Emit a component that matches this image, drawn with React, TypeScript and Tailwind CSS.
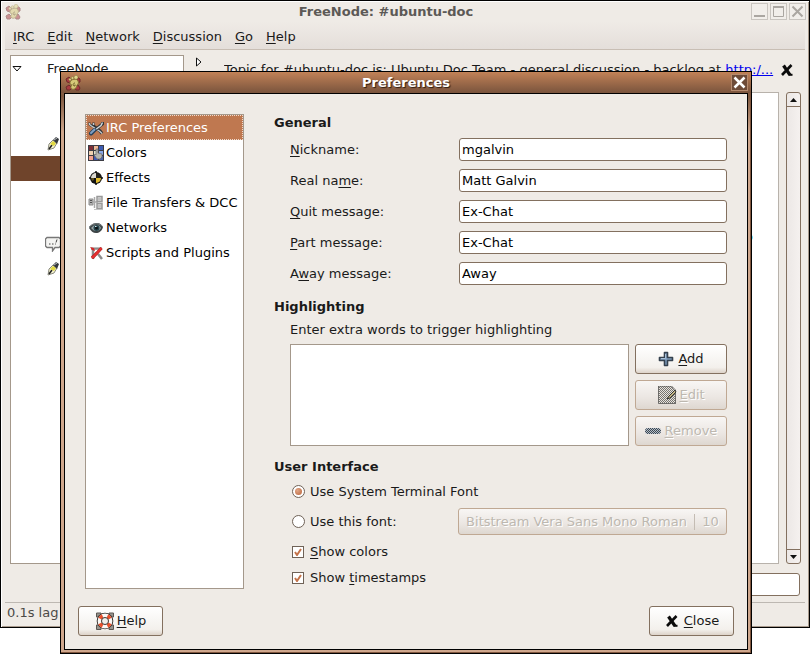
import type { ReactNode } from "react";

const font = "font-['DejaVu_Sans','Bitstream_Vera_Sans',sans-serif]";

function FootIcon({ className = "" }: { className?: string }) {
  return (
    <svg viewBox="0 0 16 16" className={`size-4 shrink-0 ${className}`} aria-hidden="true">
      <path d="M1 4l3-2 3 3-2 3-3-1zM12 2l3 2v3l-3 1zM1 12l3-2 3 3-2 2H2zM10 13l3-3 2 3-1 2h-3z" fill="#a83a40" stroke="#6f2a2a" strokeWidth="1" />
      <path d="M5 7c1-3 7-4 8-1 1 2 0 3-1 4 0 3-3 5-5 4-2-1-1-3 0-4-2 0-2-2-2-3z" fill="#d6c878" stroke="#857436" strokeWidth="1" />
      <circle cx="5" cy="4.500" r="1.200" fill="#e0d68c" stroke="#857436" strokeWidth=".5" />
      <circle cx="7.500" cy="3" r="1.300" fill="#e0d68c" stroke="#857436" strokeWidth=".5" />
      <circle cx="11" cy="2.300" r="2" fill="#e0d68c" stroke="#857436" strokeWidth=".5" />
      <path d="M10 8c-2 0-3 3 0 3V9.500" fill="none" stroke="#6d5c28" />
    </svg>
  );
}

function ToolsIcon() {
  return (
    <svg viewBox="0 0 16 16" className="size-4 shrink-0" aria-hidden="true">
      <path d="M4 5l8 6 2 2.500" stroke="#303438" strokeWidth="3.200" fill="none" />
      <path d="M1.500 2.500v2l2 1.500 2-1V2.500" stroke="#303438" strokeWidth="2.200" fill="none" />
      <path d="M1.500 3v1.500l2 1.500L12 11.500l2 2M5.500 3v2" stroke="#c4cace" strokeWidth="1.400" fill="none" />
      <path d="M14.500 2v2l-2 1.500L7 10" stroke="#303438" strokeWidth="3" fill="none" />
      <path d="M14.500 2.500l-1.500 3-6 4.500" stroke="#d4d8da" strokeWidth="1.500" fill="none" />
      <path d="M6.500 10L3 13.500" stroke="#27425e" strokeWidth="4" strokeLinecap="round" />
      <path d="M6.500 9.500L3 13" stroke="#7fa0c4" strokeWidth="2" strokeLinecap="round" />
    </svg>
  );
}

function ColorsIcon() {
  return (
    <svg viewBox="0 0 16 16" className="size-4 shrink-0" aria-hidden="true">
      <rect width="16" height="16" fill="#3c3c44" />
      <path d="M1 1h4v4H1z" fill="#7d2f36" />
      <path d="M6 1h4v4H6z" fill="#f0b896" />
      <path d="M11 1h4v4h-4z" fill="#3c5cb4" />
      <path d="M1 6h4v4H1z" fill="#f0d0b0" />
      <path d="M6 6h4v4H6z" fill="#e0e0c8" />
      <path d="M11 6h4v4h-4z" fill="#88a8e8" />
      <path d="M1 11h4v4H1z" fill="#f2a090" />
      <path d="M6 11h4v4H6z" fill="#4058b8" />
      <path d="M11 11h4v4h-4z" fill="#5068a8" />
      <path d="M8 4h2v4l4 1v3l-2 2H9l-3-4 1-1 1 1z" fill="#b4b4b0" stroke="#66666a" strokeWidth=".7" />
    </svg>
  );
}

function EffectsIcon() {
  return (
    <svg viewBox="0 0 16 16" className="size-4 shrink-0" aria-hidden="true">
      <path d="M8 1v14M1 8h14" stroke="#111" strokeWidth="1.500" />
      <circle cx="8" cy="8" r="6" fill="#111" />
      <path d="M8 8V3a5 5 0 00-5 5z" fill="#dcdad2" />
      <path d="M8 8h5a5 5 0 01-5 5z" fill="#e0bc30" />
      <path d="M8 3a5 5 0 015 5H8z" fill="#24221c" />
      <path d="M3 8h3v2l-2 1z" fill="#5c5020" />
    </svg>
  );
}

function TransfersIcon() {
  return (
    <svg viewBox="0 0 16 16" className="size-4 shrink-0" aria-hidden="true">
      <path d="M1 4h4v6H1z" fill="#b4b4b4" stroke="#8c8c8c" />
      <path d="M2 5.500h2M2 7.500h2" stroke="#555" />
      <path d="M6.500 2v11M5 7h5" stroke="#aaa" fill="none" strokeWidth="1.500" />
      <path d="M9 1.500h5v5H9zM9 8.500h5v5H9z" fill="#dadada" stroke="#999" strokeWidth="1.500" />
      <path d="M10 4h3M10 11h3" stroke="#a8a8a8" />
      <path d="M6 14.500h9" stroke="#c4c4c4" />
    </svg>
  );
}

function EyeIcon() {
  return (
    <svg viewBox="0 0 16 16" className="size-4 shrink-0" aria-hidden="true">
      <path d="M1 8c2-4 5-5 8-5 3 0 5 2 6 4-1 4-4 6-7 6-3 0-5-2-7-5z" fill="#3e4547" />
      <path d="M3 8c2-2 3-3 5-3 3 0 4 1 5 3-1 2-3 3-5 3-2 0-3-1-5-3z" fill="#98a5a6" />
      <circle cx="8.500" cy="8" r="3" fill="#25444c" />
      <circle cx="8.500" cy="8" r="1.500" fill="#0c1214" />
      <path d="M7 6.500h1.500" stroke="#d8eef0" />
      <path d="M1 7c3-3 9-5 13-1" stroke="#7c8486" fill="none" />
    </svg>
  );
}

function ScriptsIcon() {
  return (
    <svg viewBox="0 0 16 16" className="size-4 shrink-0" aria-hidden="true">
      <path d="M3 3.500h11M5 4v10M10 9l4 5" stroke="#8c8c8c" strokeWidth="2.500" fill="none" />
      <path d="M3 2.500h11" stroke="#bdbdbd" />
      <path d="M13.500 3L9 8l-5 5" stroke="#b02020" strokeWidth="3.200" fill="none" />
      <path d="M13.500 3L9 8l-5 5" stroke="#e83030" strokeWidth="2" fill="none" />
      <path d="M2 2l4 1 1 3-3-1z" fill="#d42a2a" />
    </svg>
  );
}

function PenIcon() {
  return (
    <svg viewBox="0 0 16 16" className="size-4 shrink-0" aria-hidden="true">
      <path d="M3 14l1-6 4-4 4 3-3 5z" fill="#f4f2d0" stroke="#8c8c80" strokeWidth="1" />
      <path d="M4 13l3-4" stroke="#222" strokeWidth="1.500" />
      <path d="M5 8l3-3 3 2-2 3z" fill="#e0d840" />
      <path d="M8 4l3-3 3 2-2 5z" fill="#34383c" />
      <path d="M9 4l3-2" stroke="#b8bcc0" />
    </svg>
  );
}

function BubbleIcon() {
  return (
    <svg viewBox="0 0 16 16" className="size-4 shrink-0" aria-hidden="true">
      <path d="M2 1.500h12l1.500 1.500v7L14 11.500h-4L7.500 15v-3.500H2L.5 10V3z" fill="#f4f4f2" stroke="#777" strokeWidth="1.300" />
      <path d="M4 8h1.500M7 8h1.500M10 8h.800M11 6.500l1-3" stroke="#444" strokeWidth="1" />
    </svg>
  );
}

function CrossIcon() {
  return (
    <svg viewBox="0 0 16 16" className="size-4 shrink-0" aria-hidden="true">
      <path d="M4.500 3.500l6.500 9.500" stroke="#0b0b0b" strokeWidth="3.200" />
      <path d="M12.500 3L3 13" stroke="#0b0b0b" strokeWidth="2.600" />
      <path d="M10 12.800h3.500" stroke="#0b0b0b" strokeWidth="2" />
    </svg>
  );
}

function LifebuoyIcon() {
  return (
    <svg viewBox="0 0 20 20" className="size-5 shrink-0" aria-hidden="true">
      <path d="M1.500 2h4.500v4H1.500zM14 2h4.500v4H14zM1.500 14h4.500v4.500H1.500zM14 14h4.500v4.500H14z" fill="#98958f" stroke="#5b5752" strokeWidth="1" />
      <circle cx="10" cy="10" r="8.300" fill="#2f2b28" />
      <circle cx="10" cy="10" r="5.500" fill="none" stroke="#faf8f5" strokeWidth="3.800" />
      <path d="M5 7.600A5.500 5.500 0 017.600 5M12.400 5A5.500 5.500 0 0115 7.600M15 12.400A5.500 5.500 0 0112.400 15M7.600 15A5.500 5.500 0 015 12.400" fill="none" stroke="#e8502c" strokeWidth="3.800" />
      <circle cx="10" cy="10" r="3.500" fill="#f1efeb" stroke="#45403a" />
    </svg>
  );
}

function PlusIcon() {
  return (
    <svg viewBox="0 0 16 16" className="size-4 shrink-0" aria-hidden="true">
      <path d="M6.500 1.500h3v5h5v3h-5v5h-3v-5h-5v-3h5z" fill="#7e9cbc" stroke="#35414e" strokeWidth="1.600" strokeLinejoin="round" />
      <path d="M7.500 3v4.500H3" stroke="#a8c0d8" fill="none" />
    </svg>
  );
}

function EditIcon() {
  return (
    <svg viewBox="0 0 20 20" className="size-5 shrink-0" aria-hidden="true">
      <defs>
        <pattern id="editStipple" width="2" height="2" patternUnits="userSpaceOnUse">
          <path d="M0 0h1v1H0zM1 1h1v1H1z" fill="#77746f" />
        </pattern>
      </defs>
      <path d="M1 1h14l4 4v14H1z" fill="#e6e3df" />
      <path d="M1 1h14l4 4v14H1z" fill="url(#editStipple)" />
      <path d="M1.500 1.500h13l4 4v13h-17z" fill="none" stroke="#555" strokeDasharray="1 1" />
      <path d="M18 5l-6 6-2 3 3-1 6-6z" fill="#c4b682" stroke="#333" strokeWidth="1" />
    </svg>
  );
}

function MinusIcon() {
  return (
    <svg viewBox="0 0 16 16" className="size-4 shrink-0" aria-hidden="true">
      <defs>
        <pattern id="minusStipple" width="2" height="2" patternUnits="userSpaceOnUse">
          <path d="M0 0h1v1H0zM1 1h1v1H1z" fill="#3d4752" />
        </pattern>
      </defs>
      <rect y="5" width="16" height="6" rx="3" fill="#b4bec8" />
      <rect y="5" width="16" height="6" rx="3" fill="url(#minusStipple)" />
    </svg>
  );
}

/** Label text whose keyboard accelerator letter is underlined. */
function Mnemonic({ text, at = 0 }: { text: string; at?: number }) {
  return (
    <span className="whitespace-pre">
      {text.slice(0, at)}
      <span className="underline underline-offset-2">{text[at]}</span>
      {text.slice(at + 1)}
    </span>
  );
}

function PushButton({ children, disabled = false, className = "" }: { children: ReactNode; disabled?: boolean; className?: string }) {
  const tone = disabled
    ? "border-[#bfa893] bg-linear-to-b from-[#f8f6f4] from-0% via-[#ebe6e2] via-60% to-[#ded7d0] text-[#bdb8b0] [text-shadow:1px_1px_0_#fff]"
    : "border-[#83705f] bg-linear-to-b from-white via-[#f3f0ec] via-80% to-[#ddd3c9] text-[#1a1a1a]";
  return (
    <button type="button" disabled={disabled} className={`flex items-center justify-center rounded-[3px] border ${tone} ${className}`}>
      {children}
    </button>
  );
}

const menus = ["IRC", "Edit", "Network", "Discussion", "Go", "Help"];

const categories = [
  { name: "IRC Preferences", icon: <ToolsIcon /> },
  { name: "Colors", icon: <ColorsIcon /> },
  { name: "Effects", icon: <EffectsIcon /> },
  { name: "File Transfers & DCC", icon: <TransfersIcon /> },
  { name: "Networks", icon: <EyeIcon /> },
  { name: "Scripts and Plugins", icon: <ScriptsIcon /> },
];

const fields = [
  { id: "nick", label: "Nickname:", at: 0, value: "mgalvin" },
  { id: "real", label: "Real name:", at: 7, value: "Matt Galvin" },
  { id: "quit", label: "Quit message:", at: 0, value: "Ex-Chat" },
  { id: "part", label: "Part message:", at: 0, value: "Ex-Chat" },
  { id: "away", label: "Away message:", at: 1, value: "Away" },
];

const treeIcons: ReactNode[] = [null, null, <PenIcon />, null, null, null, <BubbleIcon />, <PenIcon />];

function MainWindow() {
  const control = "flex size-[17px] items-center justify-center border border-[#c9c5c0] bg-[#f1eeea] text-[#aaa6a1]";
  return (
    <main className="flex h-[calc(100vh-26px)] flex-col border border-black bg-[#efebe6] shadow-[inset_1px_1px_0_#fff,inset_-1px_-1px_0_#a89a8c]">
      <header className="flex h-[21px] shrink-0 items-center pr-[3px] pl-1">
        <FootIcon className="opacity-50" />
        <h1 className="flex-1 text-center font-bold text-[#5c5956]">FreeNode: #ubuntu-doc</h1>
        <div className="flex gap-[2px]">
          <button type="button" aria-label="Minimize" className={control}>
            <svg viewBox="0 0 15 15" className="size-[15px]"><path d="M2 12h11" stroke="currentColor" strokeWidth="2" /></svg>
          </button>
          <button type="button" aria-label="Maximize" className={control}>
            <svg viewBox="0 0 15 15" className="size-[15px]"><path d="M2.500 3h10v9.500h-10z" fill="none" stroke="currentColor" /><path d="M2 3h11" stroke="currentColor" strokeWidth="2" /></svg>
          </button>
          <button type="button" aria-label="Close window" className={control}>
            <svg viewBox="0 0 15 15" className="size-[15px]"><path d="M2.500 2.500l10 10M12.500 2.500l-10 10" stroke="currentColor" strokeWidth="2" /></svg>
          </button>
        </div>
      </header>
      <nav className="mx-1 flex h-7 shrink-0 items-center border-b border-[#c8beb4] bg-linear-to-b from-[#efebe6] to-[#e4deda] pl-px">
        {menus.map((m) => (
          <button key={m} type="button" className="pt-[3px] pr-[6px] pl-[7px]">
            <Mnemonic text={m} />
          </button>
        ))}
      </nav>
      <div className="flex min-h-0 flex-1 gap-[9px] pt-[5px] pr-2 pl-[9px]">
        <section aria-label="Networks" className="w-[174px] shrink-0 border border-[#a4988b] bg-white">
          <div className="flex h-[25px] items-center">
            <svg viewBox="0 0 10 6" className="ml-px h-[6px] w-[10px]"><path d="M1 .500h8l-4 4.500z" fill="#fff" stroke="#111" /></svg>
            <span className="pl-[25px]">FreeNode</span>
          </div>
          {treeIcons.map((icon, i) => (
            <div key={i} className={`flex h-[25px] items-center pl-[34px] ${i === 3 ? "bg-[#6f442b]" : ""}`}>
              {icon}
            </div>
          ))}
        </section>
        <div className="flex min-w-0 flex-1 flex-col">
          <div className="flex h-[37px] shrink-0">
            <svg viewBox="0 0 6 10" className="mt-[2px] ml-[3px] h-[10px] w-[6px]"><path d="M.500 1v8l4.500-4z" fill="#fff" stroke="#111" /></svg>
            <p className="ml-[22px] min-w-0 flex-1 truncate pt-[7px]">
              Topic for #ubuntu-doc is: Ubuntu Doc Team - general discussion - backlog at{" "}
              <a href="#topic" className="text-[#0000ee] underline">http:/...</a>
            </p>
            <button type="button" aria-label="Leave discussion" className="mr-[6px] h-[29px]">
              <CrossIcon />
            </button>
          </div>
          <div className="flex min-h-0 flex-1 gap-[7px]">
            <div className="flex-1 border border-[#b8b2ab] bg-white">
              <p className="pt-[136px] pr-[25px] text-right text-[#1a8f70]">o</p>
            </div>
            <div className="flex w-[15px] flex-col rounded-[3px] border border-[#83705f] bg-linear-to-r from-[#ece8e6] to-[#f5f1ef]">
              <button type="button" aria-label="Scroll up" className="flex h-[14px] items-center justify-center border-b border-[#83705f]">
                <svg viewBox="0 0 7 4" className="h-1 w-[7px]"><path d="M0 4h7L3.500 0z" fill="#111" /></svg>
              </button>
              <div className="flex-1" />
              <button type="button" aria-label="Scroll down" className="flex h-[14px] items-center justify-center border-t border-[#83705f]">
                <svg viewBox="0 0 7 4" className="h-1 w-[7px]"><path d="M0 0h7L3.500 4z" fill="#111" /></svg>
              </button>
            </div>
          </div>
        </div>
      </div>
      <div className="flex shrink-0 justify-end px-[9px] pt-[9px] pb-[6px]">
        <input aria-label="Message" className="h-[23px] w-[600px] rounded-[3px] border border-[#83705f] bg-white px-1" />
      </div>
      <footer className="mx-1 h-[25px] shrink-0 border-t border-[#bdb8b2] px-[2px] pt-[2px] text-[#4c4a47]">0.1s lag</footer>
    </main>
  );
}

function Choice({ type, name, label, at, checked = false }: { type: "radio" | "checkbox"; name: string; label: string; at?: number; checked?: boolean }) {
  const shape = type === "radio" ? "rounded-full size-[13px]" : "size-3";
  return (
    <label className="flex h-[19px] items-center gap-[5px]">
      <span className="grid w-[13px] items-center">
        <input type={type} name={name} defaultChecked={checked} className={`peer col-start-1 row-start-1 appearance-none border border-[#6f6257] bg-white ${shape}`} />
        {type === "radio" ? (
          <span className="pointer-events-none invisible col-start-1 row-start-1 ml-[3px] size-[7px] rounded-full bg-radial-[at_35%_35%] from-[#e0a585] to-[#b9643c] peer-checked:visible" />
        ) : (
          <svg viewBox="0 0 8 8" className="pointer-events-none invisible col-start-1 row-start-1 ml-[2px] size-2 peer-checked:visible">
            <path d="M1 4l2 3 4-6" fill="none" stroke="#c4734a" strokeWidth="2" />
          </svg>
        )}
      </span>
      {at === undefined ? <span>{label}</span> : <Mnemonic text={label} at={at} />}
    </label>
  );
}

function PreferencesDialog() {
  return (
    <div role="dialog" aria-labelledby="prefs-title" className="absolute top-[71px] right-[58px] left-[60px] border border-black bg-[#cba086] bg-linear-to-b from-[#bf7f54] from-0% via-[#7e583f] via-[24px] to-[#cfa78d] to-[60px] shadow-[inset_0_1px_0_#d9a37f,inset_-1px_-1px_0_#80563e]">
      <header className="flex h-[21px] items-center bg-linear-to-b from-[#c28257] to-[#7a543d] px-[3px]">
        <FootIcon className="ml-px" />
        <h1 id="prefs-title" className="flex-1 text-center font-bold text-white [text-shadow:1px_1px_1px_#2c1a10]">Preferences</h1>
        <button type="button" aria-label="Close dialog" className="flex size-[17px] items-center justify-center border border-[#b58a6e] bg-[#6d4b38]">
          <svg viewBox="0 0 15 15" className="size-[15px]"><path d="M2.500 2.500l10 10M12.500 2.500l-10 10" stroke="#fff" strokeWidth="2.500" /></svg>
        </button>
      </header>
      <div className="mx-[3px] mb-[3px] border border-black bg-[#efebe6] px-[13px] pt-5 pb-[13px]">
        <div className="flex gap-[30px] px-[7px]">
          <ul className="w-[159px] shrink-0 border border-[#a4988b] bg-white">
            {categories.map((c, i) => (
              <li key={c.name}>
                <button
                  type="button"
                  className={`flex h-[25px] w-full items-center gap-[2px] border pl-px text-left whitespace-nowrap ${
                    i === 0 ? "border-dotted border-[#f0dccf] bg-[#bf7850] text-white" : "border-transparent text-black"
                  }`}
                >
                  {c.icon}
                  <span>{c.name}</span>
                </button>
              </li>
            ))}
          </ul>
          <div className="flex min-w-0 flex-1 flex-col pb-[2px]">
            <h2 className="leading-[18px] font-bold">General</h2>
            <div className="mt-[6px] flex flex-col gap-2">
              {fields.map((f) => (
                <div key={f.id} className="flex items-center pl-4">
                  <label htmlFor={f.id} className="w-[169px] shrink-0">
                    <Mnemonic text={f.label} at={f.at} />
                  </label>
                  <input id={f.id} defaultValue={f.value} className="h-[23px] min-w-0 flex-1 rounded-[3px] border border-[#83705f] bg-white px-[2px] text-black" />
                </div>
              ))}
            </div>
            <h2 className="mt-[13px] leading-[18px] font-bold">Highlighting</h2>
            <div className="mt-[6px] pl-4">
              <label htmlFor="words">Enter extra words to trigger highlighting</label>
              <div className="mt-[6px] flex gap-[6px]">
                <textarea id="words" className="min-w-0 flex-1 resize-none border border-[#a4988b] bg-white p-1" />
                <div className="flex w-[92px] shrink-0 flex-col gap-[6px]">
                  <PushButton className="h-[30px] gap-1"><PlusIcon /><Mnemonic text="Add" /></PushButton>
                  <PushButton disabled className="h-[30px] gap-[2px]"><EditIcon /><Mnemonic text="Edit" /></PushButton>
                  <PushButton disabled className="h-[30px] gap-1"><MinusIcon /><Mnemonic text="Remove" /></PushButton>
                </div>
              </div>
            </div>
            <h2 className="mt-3 leading-[18px] font-bold">User Interface</h2>
            <div className="mt-[6px] flex flex-col gap-[7px] pl-[18px]">
              <Choice type="radio" name="font" label="Use System Terminal Font" checked />
              <div className="flex items-center justify-between">
                <Choice type="radio" name="font" label="Use this font:" />
                <PushButton disabled className="h-[27px] w-[269px] whitespace-nowrap">
                  <span className="flex-1">Bitstream Vera Sans Mono Roman</span>
                  <span className="h-4 border-l border-[#c4bcb3]" />
                  <span className="w-[31px]">10</span>
                </PushButton>
              </div>
              <Choice type="checkbox" name="colors" label="Show colors" at={0} checked />
              <Choice type="checkbox" name="timestamps" label="Show timestamps" at={5} checked />
            </div>
          </div>
        </div>
        <footer className="mt-[17px] flex justify-between">
          <PushButton className="h-[30px] w-[85px] gap-[2px]"><LifebuoyIcon /><Mnemonic text="Help" /></PushButton>
          <PushButton className="h-[30px] w-[85px] gap-1"><CrossIcon /><Mnemonic text="Close" /></PushButton>
        </footer>
      </div>
    </div>
  );
}

export default function App() {
  return (
    <div className={`relative min-h-screen overflow-hidden bg-white text-[13px] leading-4 text-[#1a1a1a] ${font}`}>
      <MainWindow />
      <PreferencesDialog />
    </div>
  );
}
